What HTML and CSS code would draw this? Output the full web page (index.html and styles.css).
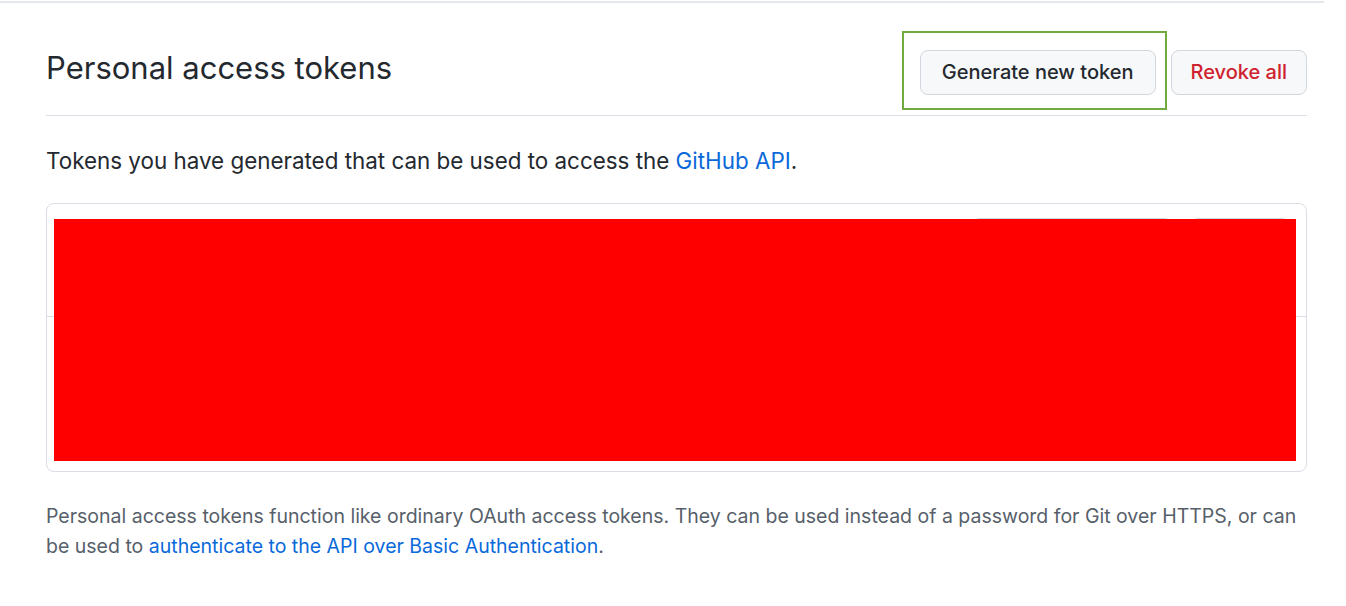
FILE: index.html
```html
<!DOCTYPE html>
<html>
<head>
  <meta charset='utf8'>
  <title>Personal access tokens</title>
  <link rel="stylesheet" href="styles.css">
</head>
<body>
  <div class='topline'></div>
  <div class='settings'>
    <div class='subhead'>
      <h2 class='subhead-heading'>Personal access tokens</h2>
      <div class='subhead-actions'>
        <a class='btn highlight' href='#'>Generate new token</a>
        <a class='btn btn-danger' href='#'>Revoke all</a>
      </div>
    </div>

    <p class='lead'>Tokens you have generated that can be used to access the <a href='#'>GitHub API</a>.</p>

    <div class='box'>
      <div class='box-row'>
        <span class='token-name'>token</span>
        <span class='row-actions'>
          <span class='btn btn-sm btn-wide'>Edit</span>
          <span class='btn btn-sm'>Delete</span>
        </span>
      </div>
      <div class='box-row box-row-tall'>
        <span class='token-name'>token</span>
      </div>
      <!-- redacted -->
      <div class='redact'></div>
    </div>

    <p class='note'>Personal access tokens function like ordinary OAuth access tokens. They can be used instead of a password for Git over HTTPS, or can be used to <a href='#'>authenticate to the API over Basic Authentication</a>.</p>
  </div>
</body>
</html>
```

FILE: styles.css
```css
html, body {
  margin: 0;
  padding: 0;
  background: #fff;
}
body {
  font-family: Inter, "Liberation Sans", sans-serif;
  color: #24292f;
}
a {
  color: #0969da;
  text-decoration: none;
}
.topline {
  margin-top: 1px;
  width: 1324px;
  height: 2px;
  background: #e4e8ec;
}
.settings {
  width: 1261px;
  margin-left: 46px;
}
.subhead {
  display: flex;
  align-items: center;
  justify-content: space-between;
  margin-top: 47px;
  padding-bottom: 20px;
  border-bottom: 1px solid #d8dee4;
}
.subhead-heading {
  margin: 0 0 9px;
  font-size: 31px;
  font-weight: 400;
  line-height: 32px;
}
.subhead-actions {
  display: flex;
  gap: 15px;
}
.btn {
  display: inline-block;
  box-sizing: border-box;
  height: 45px;
  line-height: 43px;
  padding: 0 21px;
  font-size: 20px;
  font-weight: 500;
  color: #24292f;
  background: #f6f8fa;
  border: 1px solid #d0d7de;
  border-radius: 8px;
}
.btn-danger {
  padding: 0 19px;
  color: #cf222e;
}
.highlight {
  position: relative;
}
.highlight::after {
  content: '';
  position: absolute;
  top: -20px;
  left: -19px;
  right: -12px;
  bottom: -16px;
  border: 2px solid #6fab3e;
}
.lead {
  margin: 30px 0 0;
  font-size: 22.4px;
  line-height: 30px;
}
.box {
  position: relative;
  margin-top: 27px;
  border: 1px solid #d8dee4;
  border-radius: 8px;
}
.box-row {
  display: flex;
  justify-content: space-between;
  align-items: flex-start;
  box-sizing: border-box;
  height: 113px;
  padding: 14px 16px;
  border-bottom: 1px solid #d8dee4;
}
.box-row-tall {
  height: 154px;
  border-bottom: 0;
}
.token-name {
  font-size: 18px;
}
.row-actions {
  display: flex;
  gap: 18px;
}
.btn-sm {
  height: 40px;
  width: 100px;
}
.btn-wide {
  width: 200px;
}
.redact {
  position: absolute;
  top: 15px;
  left: 7px;
  right: 10px;
  bottom: 10px;
  background: #fe0000;
}
.note {
  margin: 30px 0 0;
  font-size: 19.5px;
  line-height: 29.5px;
  color: #57606a;
}
```
